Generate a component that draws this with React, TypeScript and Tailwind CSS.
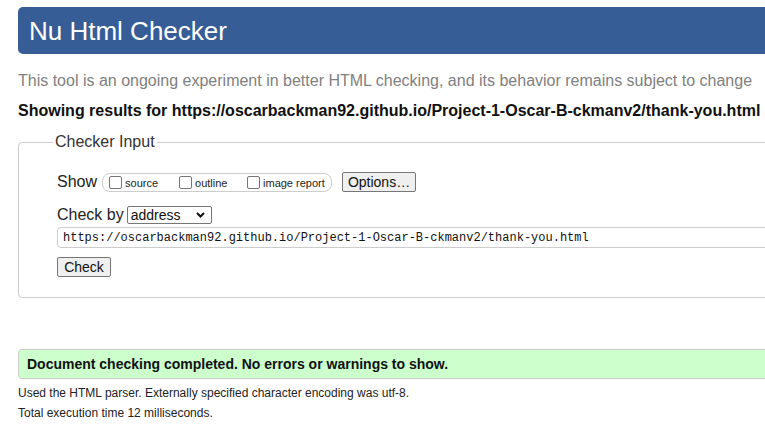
import React from "react";

const url = "https://oscarbackman92.github.io/Project-1-Oscar-B-ckmanv2/thank-you.html";

const options = ["source", "outline", "image report"];

const Checkbox: React.FC<{ label: string }> = ({ label }) => (
    <label className="flex items-center mr-[15px] last:mr-0">
        <span className="w-[13px] h-[13px] border border-[#767676] rounded-[2px] bg-white mr-[3px]" />
        <span className="text-[11px] text-[#222] leading-[13px] mt-[3px]">{label}</span>
    </label>
);

const App: React.FC = () => {
    return (
        <div className="w-[765px] h-[428px] overflow-hidden bg-white font-['Liberation_Sans',Arial,sans-serif] text-[#222]">
            <div className="w-[800px] pl-[18px] pt-[7px]">
                {/* header */}
                <div className="h-[47px] bg-[#365d95] rounded-[5px] pl-[12px] flex items-center">
                    <h1 className="text-[26px] leading-[30px] text-white mt-[1px] -ml-[1px]">Nu Html Checker</h1>
                </div>

                <p className="mt-[18px] text-[16px] leading-[18px] text-[#808080]">
                    This tool is an ongoing experiment in better HTML checking, and its behavior remains subject to change
                </p>
                <p className="mt-[12px] text-[16px] leading-[18px] font-bold text-[#111]">
                    Showing results for {url}
                </p>

                {/* checker input */}
                <fieldset className="mt-[13px] border border-[#cccccc] rounded-[4px] pl-[38px] pb-[20px]">
                    <legend className="-ml-[4px] px-[2px] text-[16px] leading-[18px] text-[#333]">Checker Input</legend>

                    <div className="flex items-center mt-[21px] h-[20px]">
                        <span className="text-[16px] leading-[18px] text-[#222] mr-[5px]">Show</span>
                        <div className="h-[19px] w-[230px] border border-[#cccccc] rounded-[8px] flex items-center pl-[6px]">
                            {options.map((o, i) => (
                                <div key={i} className={i === 0 ? "w-[70px]" : i === 1 ? "w-[68px]" : ""}>
                                    <Checkbox label={o} />
                                </div>
                            ))}
                        </div>
                        <button className="ml-[10px] h-[20px] w-[74px] bg-[#efefef] border border-[#767676] rounded-[2px] text-[14px] leading-[16px] text-[#111]">
                            Options…
                        </button>
                    </div>

                    <div className="flex items-center mt-[14px] h-[18px]">
                        <span className="text-[16px] leading-[18px] text-[#222] mr-[3px]">Check by</span>
                        <div className="h-[18px] w-[85px] border border-[#767676] rounded-[2px] flex items-center justify-between pl-[3px] pr-[6px]">
                            <span className="text-[14px] leading-[16px] text-[#111]">address</span>
                            <svg width="9" height="6" viewBox="0 0 9 6">
                                <polyline points="1,1 4.5,4.5 8,1" fill="none" stroke="#111" strokeWidth="2" />
                            </svg>
                        </div>
                    </div>

                    <div className="mt-[3px] h-[21px] border border-[#cccccc] rounded-l-[4px] flex items-center pl-[5px]">
                        <span className="font-['Liberation_Mono','DejaVu_Sans_Mono',monospace] text-[12px] leading-[14px] text-[#111]">
                            {url}
                        </span>
                    </div>

                    <button className="mt-[9px] h-[20px] w-[54px] bg-[#efefef] border border-[#767676] rounded-[2px] text-[14px] leading-[16px] text-[#111] block">
                        Check
                    </button>
                </fieldset>

                {/* result */}
                <div className="mt-[51px] h-[30px] bg-[#ccffcc] border border-[#cccccc] rounded-[4px] flex items-center pl-[8px]">
                    <span className="text-[14px] leading-[16px] font-bold text-[#111]">
                        Document checking completed. No errors or warnings to show.
                    </span>
                </div>

                <p className="mt-[7px] text-[12px] leading-[14px] text-[#222]">
                    Used the HTML parser. Externally specified character encoding was utf-8.
                </p>
                <p className="mt-[6px] text-[12px] leading-[14px] text-[#222]">Total execution time 12 milliseconds.</p>
            </div>
        </div>
    );
};

export default App;
